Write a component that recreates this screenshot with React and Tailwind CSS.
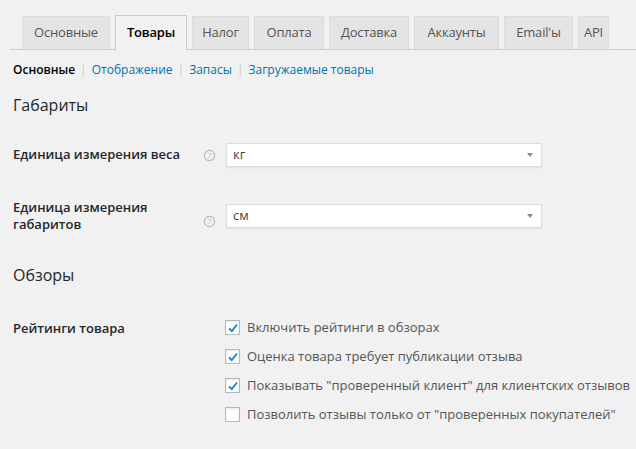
const tabs=[["Основные",88],["Товары",72],["Налог",57],["Оплата",70],["Доставка",80],["Аккаунты",85],["Email'ы",69],["API",31]];
const Help=()=>(<svg width="13" height="13" viewBox="0 0 14 14" className="shrink-0"><circle cx="7" cy="7" r="5.5" fill="none" stroke="#b4b9be" strokeWidth="1.2"/><text x="7" y="9.8" fontSize="8" textAnchor="middle" fill="#b4b9be" fontFamily="Open Sans">?</text></svg>);
const Select=({v})=>(<div className="w-[316px] h-[24px] bg-white border border-[#ddd] shadow-[0_1px_2px_rgba(0,0,0,0.07)] flex items-center justify-between pl-[6px] pr-[8px] text-[13px] text-[#444]"><span>{v}</span><span className="w-0 h-0 border-l-[3px] border-r-[3px] border-t-[4px] border-l-transparent border-r-transparent border-t-[#888]"></span></div>);
const Cb=({c,t})=>(<div className="flex items-center gap-[7px] h-[29px]"><div className="w-[15px] h-[15px] bg-white border border-[#b4b9be] shadow-[inset_0_1px_2px_rgba(0,0,0,0.1)] flex items-center justify-center">{c&&<svg width="12" height="12" viewBox="0 0 12 12"><path d="M2 6.5 L4.8 9 L10 2.5" fill="none" stroke="#1e8cbe" strokeWidth="2"/></svg>}</div><span className="text-[13px] text-[#555]">{t}</span></div>);
export default function App(){return(<div className="w-[636px] h-[449px] bg-[#f1f1f1] overflow-hidden text-[#23282d]" style={{fontFamily:"'Open Sans',sans-serif"}}>
<div className="flex items-end gap-[5px] pl-[12px] pt-[15px] border-b border-[#ccc] ml-[10px]">
{tabs.map(([t,w],i)=>(<div key={t} style={{width:w}} className={`px-0 flex items-center justify-center whitespace-nowrap text-[13px] tracking-[-0.2px] border border-b-0 ${i===1?"bg-[#f1f1f1] border-[#ccc] text-black font-semibold -mb-px h-[35px]":"bg-[#e4e4e4] border-[#ddd] text-[#555] h-[33px]"}`}>{t}</div>))}
</div>
<div className="pl-[13px] mt-[11px] text-[12px] flex items-center gap-[5px]"><span className="font-semibold text-black">Основные</span><span className="text-[#ccc]">|</span><span className="text-[#0073aa]">Отображение</span><span className="text-[#ccc]">|</span><span className="text-[#0073aa]">Запасы</span><span className="text-[#ccc]">|</span><span className="text-[#0073aa]">Загружаемые товары</span></div>
<div className="pl-[13px] mt-[14px] text-[16px]">Габариты</div>
<div className="flex items-center mt-[26px] pl-[13px]"><div className="w-[190px] text-[13px] font-semibold">Единица измерения веса</div><Help/><div className="ml-[10px]"><Select v="кг"/></div></div>
<div className="flex items-center mt-[32px] pl-[13px]"><div className="w-[190px] text-[13px] font-semibold leading-[17px]">Единица измерения<br/>габаритов</div><div className="mt-[10px]"><Help/></div><div className="ml-[10px]"><Select v="см"/></div></div>
<div className="pl-[13px] mt-[30px] text-[16px]">Обзоры</div>
<div className="flex pl-[13px] mt-[27px]"><div className="w-[212px] text-[13px] font-semibold pt-[5px]">Рейтинги товара</div><div className="-mt-[1px]">
<Cb c t="Включить рейтинги в обзорах"/><Cb c t="Оценка товара требует публикации отзыва"/><Cb c t={'Показывать "проверенный клиент" для клиентских отзывов'}/><Cb t={'Позволить отзывы только от "проверенных покупателей"'}/></div></div>
</div>)}
